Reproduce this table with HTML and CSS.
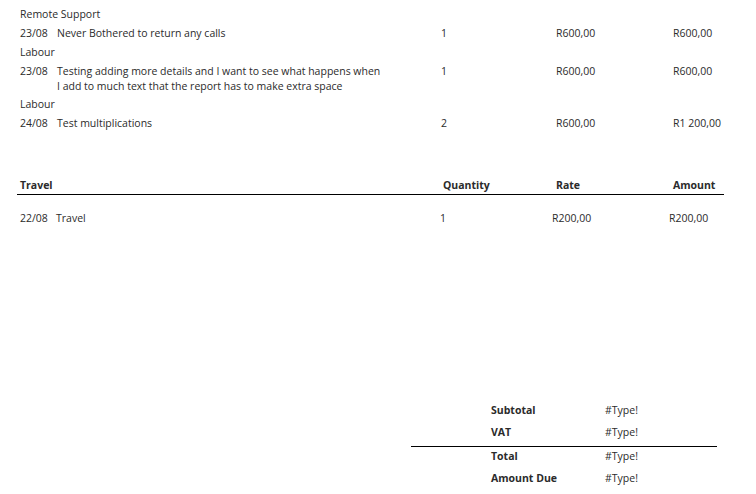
FILE: index.html
```html
<!DOCTYPE html>
<html>
<head>
<meta charset="utf-8">
<link rel="stylesheet" href="styles.css">
</head>
<body>
<div class="page">
  <section class="items">
    <div class="cat">Remote Support</div>
    <div class="item">
      <span class="date">23/08</span>
      <span class="desc">Never Bothered to return any calls</span>
      <span class="qty">1</span>
      <span class="rate">R600,00</span>
      <span class="amt">R600,00</span>
    </div>
    <div class="cat">Labour</div>
    <div class="item">
      <span class="date">23/08</span>
      <span class="desc">Testing adding more details and I want to see what happens when<br>I add to much text that the report has to make extra space</span>
      <span class="qty">1</span>
      <span class="rate">R600,00</span>
      <span class="amt">R600,00</span>
    </div>
    <div class="cat">Labour</div>
    <div class="item">
      <span class="date">24/08</span>
      <span class="desc">Test multiplications</span>
      <span class="qty">2</span>
      <span class="rate">R600,00</span>
      <span class="amt">R1 200,00</span>
    </div>
  </section>

  <section class="travel">
    <div class="thead">
      <span class="th-title">Travel</span>
      <span class="th-qty">Quantity</span>
      <span class="th-rate">Rate</span>
      <span class="th-amt">Amount</span>
    </div>
    <div class="trow">
      <span class="date">22/08</span>
      <span class="desc">Travel</span>
      <span class="qty">1</span>
      <span class="rate">R200,00</span>
      <span class="amt">R200,00</span>
    </div>
  </section>

  <section class="totals">
    <div class="tot-row"><span class="tot-label">Subtotal</span><span class="tot-val">#Type!</span></div>
    <div class="tot-row"><span class="tot-label">VAT</span><span class="tot-val">#Type!</span></div>
    <div class="tot-row tot-sep"><span class="tot-label">Total</span><span class="tot-val">#Type!</span></div>
    <div class="tot-row"><span class="tot-label">Amount Due</span><span class="tot-val">#Type!</span></div>
  </section>
</div>
</body>
</html>
```
FILE: styles.css
```css
html, body {
  margin: 0;
  padding: 0;
  background: #fff;
}
body {
  font-family: "Open Sans", "Noto Sans", sans-serif;
  font-size: 10.5px;
  color: #2b2b2b;
}
.page {
  width: 756px;
  height: 494px;
  padding-top: 5px;
  box-sizing: border-box;
  display: flex;
  flex-direction: column;
}
.items {
  padding-left: 20px;
}
.cat {
  line-height: 15px;
  padding-top: 2px;
  padding-bottom: 2px;
}
.item {
  display: grid;
  grid-template-columns: 37px 384px 115px 117px auto;
  line-height: 15px;
  padding-top: 2px;
  padding-bottom: 1.5px;
}
.travel {
  margin-top: 45px;
  margin-left: 17px;
  width: 707px;
}
.thead {
  display: grid;
  grid-template-columns: 423px 113px 117px auto;
  font-weight: bold;
  line-height: 15px;
  padding: 0 0 1px 3px;
  border-bottom: 1.5px solid #000;
}
.trow {
  display: grid;
  grid-template-columns: 36px 384px 112px 117px auto;
  line-height: 15px;
  padding: 16px 0 0 3px;
}
.totals {
  margin-top: 177px;
  margin-left: 411px;
  width: 306px;
}
.tot-row {
  display: grid;
  grid-template-columns: 194px auto;
  line-height: 15px;
  height: 22.7px;
  box-sizing: border-box;
}
.tot-label {
  padding-left: 80px;
  font-weight: bold;
}
.tot-sep {
  border-top: 1.5px solid #000;
  margin-top: -2px;
  padding-top: 2px;
  height: 24.7px;
}
```
